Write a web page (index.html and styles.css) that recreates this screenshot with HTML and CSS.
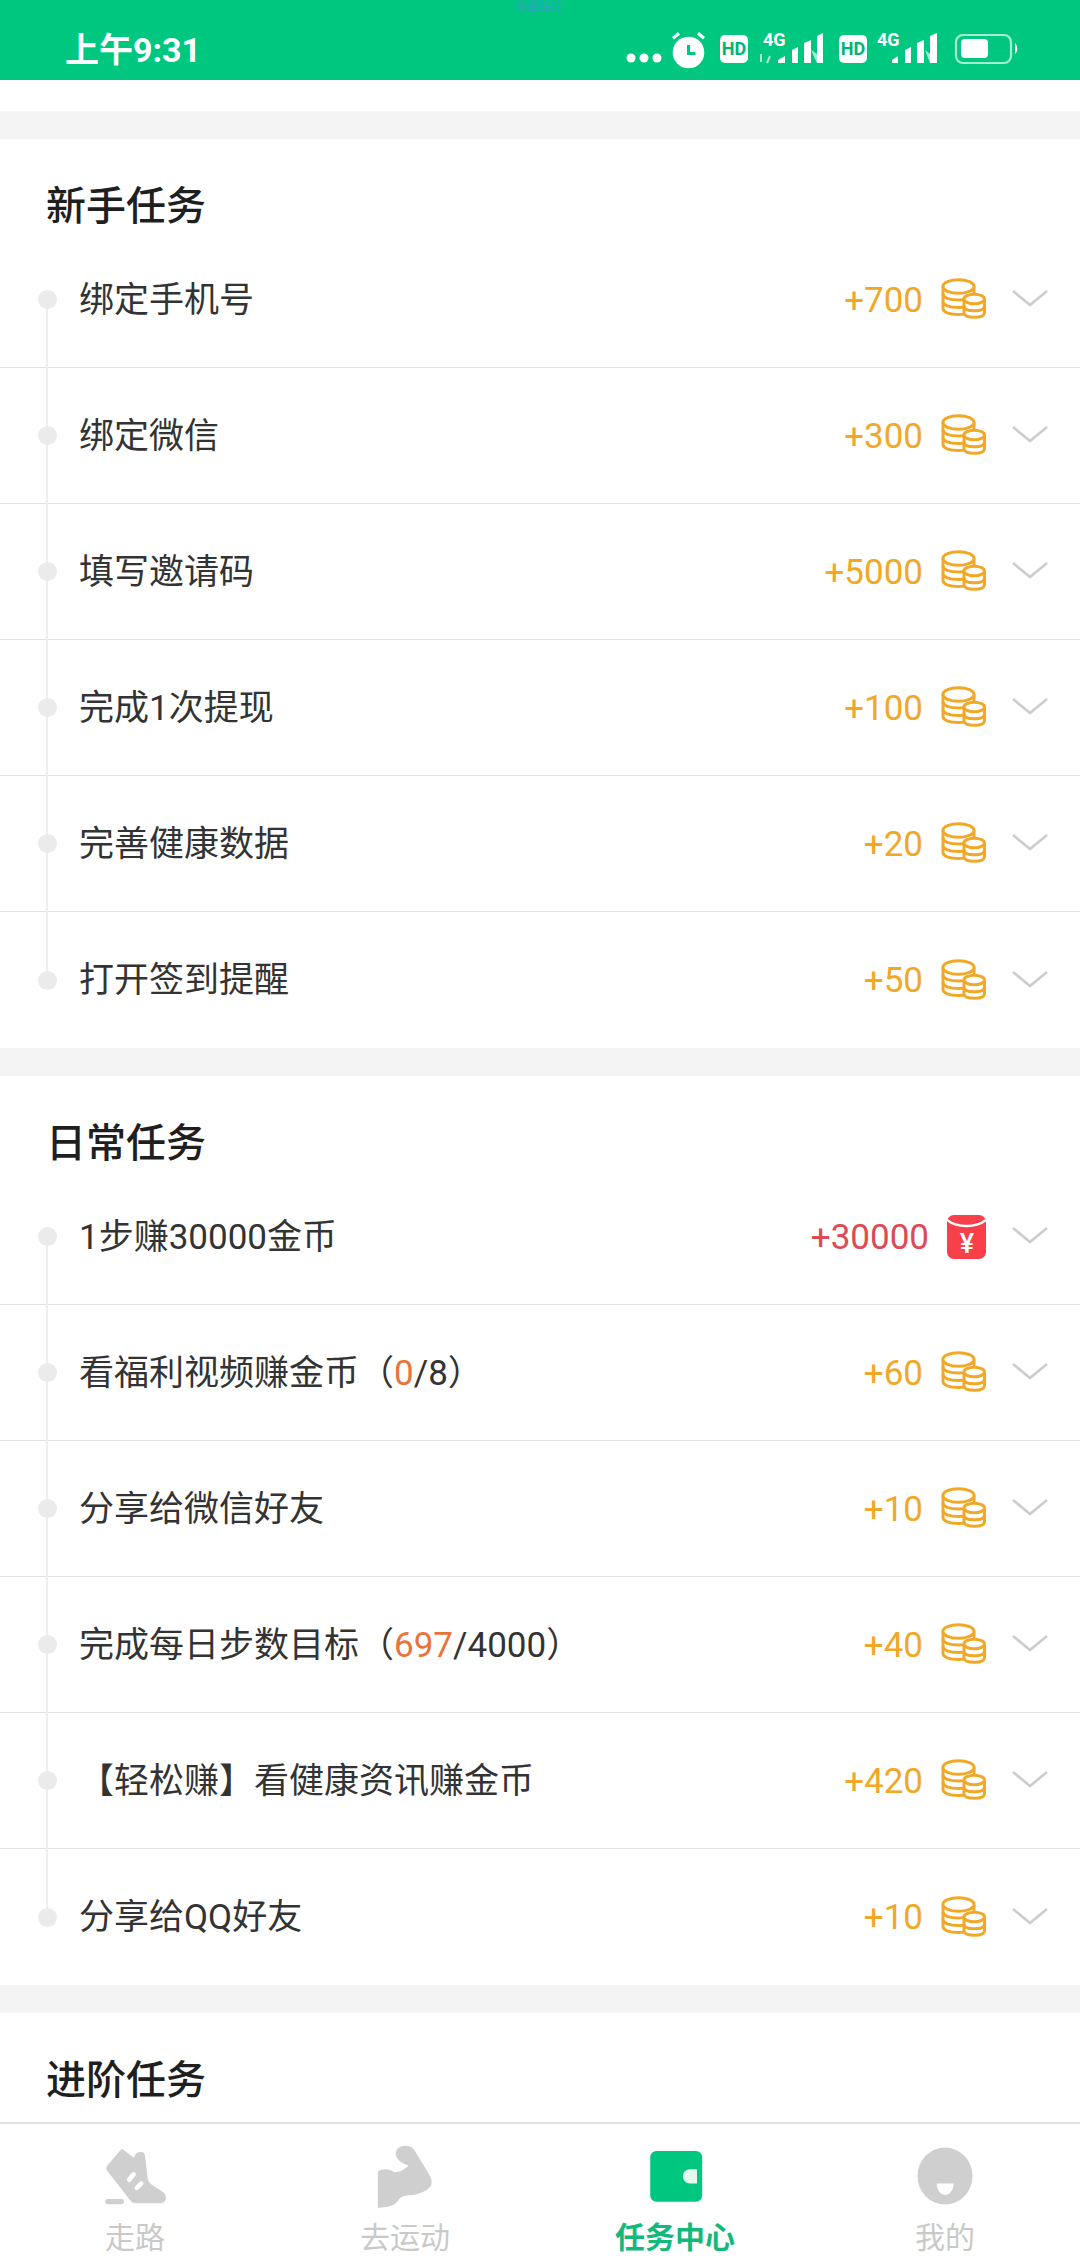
FILE: index.html
```html
<!DOCTYPE html>
<html lang="zh-CN">
<head>
    <meta charset="UTF-8">
    <meta name="viewport" content="width=device-width, initial-scale=1.0">
    <title>任务中心</title>
    <link rel="stylesheet" href="styles.css">
</head>
<body>
    <!-- shared icons -->
    <svg class="defs" width="0" height="0">
        <symbol id="coins" viewBox="0 0 45 41">
            <g fill="#fff" stroke="#f2a827" stroke-width="3" stroke-linejoin="round">
                <path d="M2 8.500v22c0 3.500 6 6 15.500 6s15.500-2.500 15.500-6v-22"/>
                <ellipse cx="17.500" cy="8.500" rx="15.500" ry="6.800"/>
                <path d="M2 16c0 3.500 6 6 15.500 6S33 19.500 33 16M2 23.500c0 3.500 6 6 15.500 6s15.500-2.500 15.500-6" fill="none"/>
                <path d="M23 21v13.500c0 3 4 4.800 10.500 4.800S43.500 37.500 43.500 34.500V21"/>
                <ellipse cx="33.250" cy="21" rx="10.250" ry="4.800"/>
                <path d="M23 28c0 3 4 4.800 10.250 4.800S43.500 31 43.500 28" fill="none"/>
            </g>
        </symbol>
        <symbol id="chevron" viewBox="0 0 36 17">
            <path d="M1 1l17 14L35 1" fill="none" stroke="#cdcdcd" stroke-width="2.600"/>
        </symbol>
    </svg>

    <div class="app">
        <header class="status-bar">
            <span class="status-carrier">流量监控</span>
            <span class="status-time">上午9:31</span>
            <svg class="status-icons" width="404" height="50" viewBox="620 20 404 50">
                <g fill="#fff">
                    <circle cx="631" cy="58" r="4.500"/>
                    <circle cx="644" cy="58" r="4.500"/>
                    <circle cx="657" cy="58" r="4.500"/>
                    <circle cx="688.500" cy="52.500" r="15.800"/>
                    <path d="M672 37l6-5 2 2.500-6 5zM705 37l-6-5-2 2.500 6 5z"/>
                    <rect x="720" y="35" width="28" height="28" rx="5"/>
                    <rect x="839" y="35" width="28" height="28" rx="5"/>
                    <path d="M778 63v-3l7-4v7zM792 63V50l6-3v16zM804 63V43l7-3v23zM817 63V36l6-3v30z"/>
                    <path d="M892 63v-3l6-4v7zM905 63V50l6-3v16zM917 63V43l7-3v23zM930 63V36l7-3v30z"/>
                    <rect x="961" y="39" width="27" height="19" rx="4"/>
                    <path d="M1015 43c3 3 3 9 0 11z"/>
                </g>
                <path d="M811 50l6 13v-9zM925 50l5 13v-9z" fill="#a6ecd2"/>
                <path d="M688.500 45v8.500h7" fill="none" stroke="#00c77f" stroke-width="3"/>
                <rect x="956" y="35" width="55" height="28" rx="7" fill="none" stroke="#a6ecd2" stroke-width="2.200"/>
                <path d="M761 62v-8M767 63l3-7" stroke="#a6ecd2" stroke-width="2" fill="none"/>
                <g class="status-small">
                    <text x="734" y="55" text-anchor="middle" class="hd">HD</text>
                    <text x="853" y="55" text-anchor="middle" class="hd">HD</text>
                    <text x="763" y="46" class="net">4G</text>
                    <text x="877" y="46" class="net">4G</text>
                </g>
            </svg>
        </header>

        <main class="content">
            <div class="top-strip"></div>

            <section class="section">
                <h2 class="section-title">新手任务</h2>
                <div class="task-list">
                    <div class="task">
                        <span class="task-dot"></span>
                        <span class="task-name">绑定手机号</span>
                        <span class="task-reward">+700</span>
                        <svg class="icon-coins"><use href="#coins"/></svg>
                        <svg class="icon-chevron"><use href="#chevron"/></svg>
                    </div>
                    <div class="task">
                        <span class="task-dot"></span>
                        <span class="task-name">绑定微信</span>
                        <span class="task-reward">+300</span>
                        <svg class="icon-coins"><use href="#coins"/></svg>
                        <svg class="icon-chevron"><use href="#chevron"/></svg>
                    </div>
                    <div class="task">
                        <span class="task-dot"></span>
                        <span class="task-name">填写邀请码</span>
                        <span class="task-reward">+5000</span>
                        <svg class="icon-coins"><use href="#coins"/></svg>
                        <svg class="icon-chevron"><use href="#chevron"/></svg>
                    </div>
                    <div class="task">
                        <span class="task-dot"></span>
                        <span class="task-name">完成1次提现</span>
                        <span class="task-reward">+100</span>
                        <svg class="icon-coins"><use href="#coins"/></svg>
                        <svg class="icon-chevron"><use href="#chevron"/></svg>
                    </div>
                    <div class="task">
                        <span class="task-dot"></span>
                        <span class="task-name">完善健康数据</span>
                        <span class="task-reward">+20</span>
                        <svg class="icon-coins"><use href="#coins"/></svg>
                        <svg class="icon-chevron"><use href="#chevron"/></svg>
                    </div>
                    <div class="task">
                        <span class="task-dot"></span>
                        <span class="task-name">打开签到提醒</span>
                        <span class="task-reward">+50</span>
                        <svg class="icon-coins"><use href="#coins"/></svg>
                        <svg class="icon-chevron"><use href="#chevron"/></svg>
                    </div>
                </div>
            </section>

            <section class="section">
                <h2 class="section-title">日常任务</h2>
                <div class="task-list">
                    <div class="task">
                        <span class="task-dot"></span>
                        <span class="task-name">1步赚30000金币</span>
                        <span class="task-reward task-reward-red">+30000</span>
                        <svg class="icon-envelope" viewBox="0 0 39 44">
                            <rect width="39" height="44" rx="7" fill="#f9404a"/>
                            <path d="M0 5c5 4 12 6 19.500 6S34 9 39 5" fill="none" stroke="#fff" stroke-width="2.400"/>
                            <text x="20" y="38" text-anchor="middle" class="envelope-sign">¥</text>
                        </svg>
                        <svg class="icon-chevron"><use href="#chevron"/></svg>
                    </div>
                    <div class="task">
                        <span class="task-dot"></span>
                        <span class="task-name">看福利视频赚金币（<em>0</em>/8）</span>
                        <span class="task-reward">+60</span>
                        <svg class="icon-coins"><use href="#coins"/></svg>
                        <svg class="icon-chevron"><use href="#chevron"/></svg>
                    </div>
                    <div class="task">
                        <span class="task-dot"></span>
                        <span class="task-name">分享给微信好友</span>
                        <span class="task-reward">+10</span>
                        <svg class="icon-coins"><use href="#coins"/></svg>
                        <svg class="icon-chevron"><use href="#chevron"/></svg>
                    </div>
                    <div class="task">
                        <span class="task-dot"></span>
                        <span class="task-name">完成每日步数目标（<em>697</em>/4000）</span>
                        <span class="task-reward">+40</span>
                        <svg class="icon-coins"><use href="#coins"/></svg>
                        <svg class="icon-chevron"><use href="#chevron"/></svg>
                    </div>
                    <div class="task">
                        <span class="task-dot"></span>
                        <span class="task-name">【轻松赚】看健康资讯赚金币</span>
                        <span class="task-reward">+420</span>
                        <svg class="icon-coins"><use href="#coins"/></svg>
                        <svg class="icon-chevron"><use href="#chevron"/></svg>
                    </div>
                    <div class="task">
                        <span class="task-dot"></span>
                        <span class="task-name">分享给QQ好友</span>
                        <span class="task-reward">+10</span>
                        <svg class="icon-coins"><use href="#coins"/></svg>
                        <svg class="icon-chevron"><use href="#chevron"/></svg>
                    </div>
                </div>
            </section>

            <section class="section section-last">
                <h2 class="section-title">进阶任务</h2>
            </section>
        </main>

        <nav class="tab-bar">
            <div class="tab">
                <svg class="tab-icon" viewBox="296 155 192 186">
                    <path d="M355 170c-2 0-4 1-6 4l-37 43c-5 6-5 11-1 16l68 87c4 5 8 7 14 7h72c10 0 17-6 17-16 0-8-4-14-12-19l-28-18c-7-5-11-10-13-18l-8-67c-1-8-5-11-12-11-9 0-14 3-17 9l-3 8-28-21c-2-2-4-4-6-4z" fill="#cfcfcf"/>
                    <rect x="305" y="315" width="55" height="15" rx="7" fill="#cfcfcf"/>
                    <path d="M375 259l13-16M397 283l13-13" stroke="#fff" stroke-width="13" stroke-linecap="round"/>
                </svg>
                <span class="tab-label">走路</span>
            </div>
            <div class="tab">
                <svg class="tab-icon" viewBox="1080 155 192 186">
                    <path d="M1097 235c12-8 30-10 48 2 14 0 30-6 41-20-14-4-37-16-37-34 0-14 12-23 30-23 10 0 18 3 24 12l40 66c14 22 14 38 0 48-16 12-40 18-60 19-14 1-22 6-27 14-10 14-30 21-59 21z" fill="#cfcfcf"/>
                </svg>
                <span class="tab-label">去运动</span>
            </div>
            <div class="tab tab-active">
                <svg class="tab-icon" viewBox="296 155 192 186">
                    <rect x="320" y="175" width="151" height="148" rx="18" fill="#00c77f"/>
                    <path d="M456 228h-20c-12 0-21 9-21 21s9 21 21 21h20z" fill="#e4f8f0"/>
                </svg>
                <span class="tab-label">任务中心</span>
            </div>
            <div class="tab">
                <svg class="tab-icon" viewBox="1080 155 192 186">
                    <ellipse cx="1176" cy="248" rx="80" ry="83" fill="#cfcfcf"/>
                    <path d="M1152 270h49c0 19-11 33-24.500 33s-24.500-14-24.500-33z" fill="#fff"/>
                </svg>
                <span class="tab-label">我的</span>
            </div>
        </nav>
    </div>
</body>
</html>
```

FILE: styles.css
```css
* { box-sizing: border-box; }
body { margin: 0; font-family: Roboto, "Noto Sans CJK SC", sans-serif; color: #333; background: #fff; }
.defs { position: absolute; }
.app { display: flex; flex-direction: column; width: 1080px; height: 2260px; overflow: hidden; }

/* status bar */
.status-bar { position: relative; flex: none; display: flex; align-items: center; justify-content: space-between; height: 80px; padding: 0 56px 0 65px; background: #00c77f; color: #fff; }
.status-carrier { position: absolute; top: 0; left: 515px; font-size: 12px; line-height: 12px; color: #2aa6c0; }
.status-time { font-size: 34px; font-weight: 700; line-height: 40px; margin-top: 20px; }
.status-icons { margin-top: 10px; }
.status-small text { font-family: Roboto, sans-serif; font-weight: 700; }
.hd { font-size: 18px; fill: #00b574; }
.net { font-size: 18px; fill: #fff; }

/* task sections */
.content { flex: 1; overflow: hidden; background: #f4f4f4; }
.top-strip { height: 31px; background: #fff; }
.section { margin-top: 28px; background: #fff; }
.section-last { height: 140px; }
.section-title { margin: 0; height: 93px; padding: 48px 0 0 46px; font-size: 40px; line-height: 40px; font-weight: 500; color: #1f1f1f; }
.task-list { position: relative; }
.task-list::before { content: ""; position: absolute; top: 68px; bottom: 68px; left: 46px; width: 2px; background: #eeeeee; }
.task { display: flex; align-items: center; height: 136px; padding: 0 32px 0 38px; border-bottom: 1px solid #e3e3e3; }
.task:last-child { border-bottom: none; }
.task-dot { position: relative; flex: none; width: 19px; height: 19px; margin-right: 22px; border-radius: 50%; background: #ebebeb; }
.task-name { flex: 1; margin-top: 2px; font-size: 35px; line-height: 46px; color: #333; }
.task-name em { font-style: normal; color: #e8743b; }
.task-reward { margin-top: 2px; font-size: 35px; line-height: 46px; color: #f2a827; margin-right: 18px; }
.task-reward-red { color: #dd4a55; }
.icon-coins { flex: none; width: 45px; height: 41px; margin-top: -2px; }
.icon-envelope { flex: none; width: 39px; height: 44px; }
.icon-chevron { flex: none; width: 36px; height: 17px; margin-left: 26px; margin-top: -2px; }
.envelope-sign { font-family: Roboto, sans-serif; font-size: 27px; font-weight: 500; fill: #fff; }

/* bottom tabs */
.tab-bar { flex: none; display: grid; grid-template-columns: repeat(4, 1fr); height: 138px; padding-top: 20px; background: #fff; border-top: 2px solid #e3e3e3; }
.tab { display: flex; flex-direction: column; align-items: center; }
.tab-icon { width: 66px; height: 64px; }
.tab-label { margin-top: 12px; font-size: 30px; line-height: 36px; color: #c9c9c9; }
.tab-active .tab-label { color: #12b97a; font-weight: 700; }
```
